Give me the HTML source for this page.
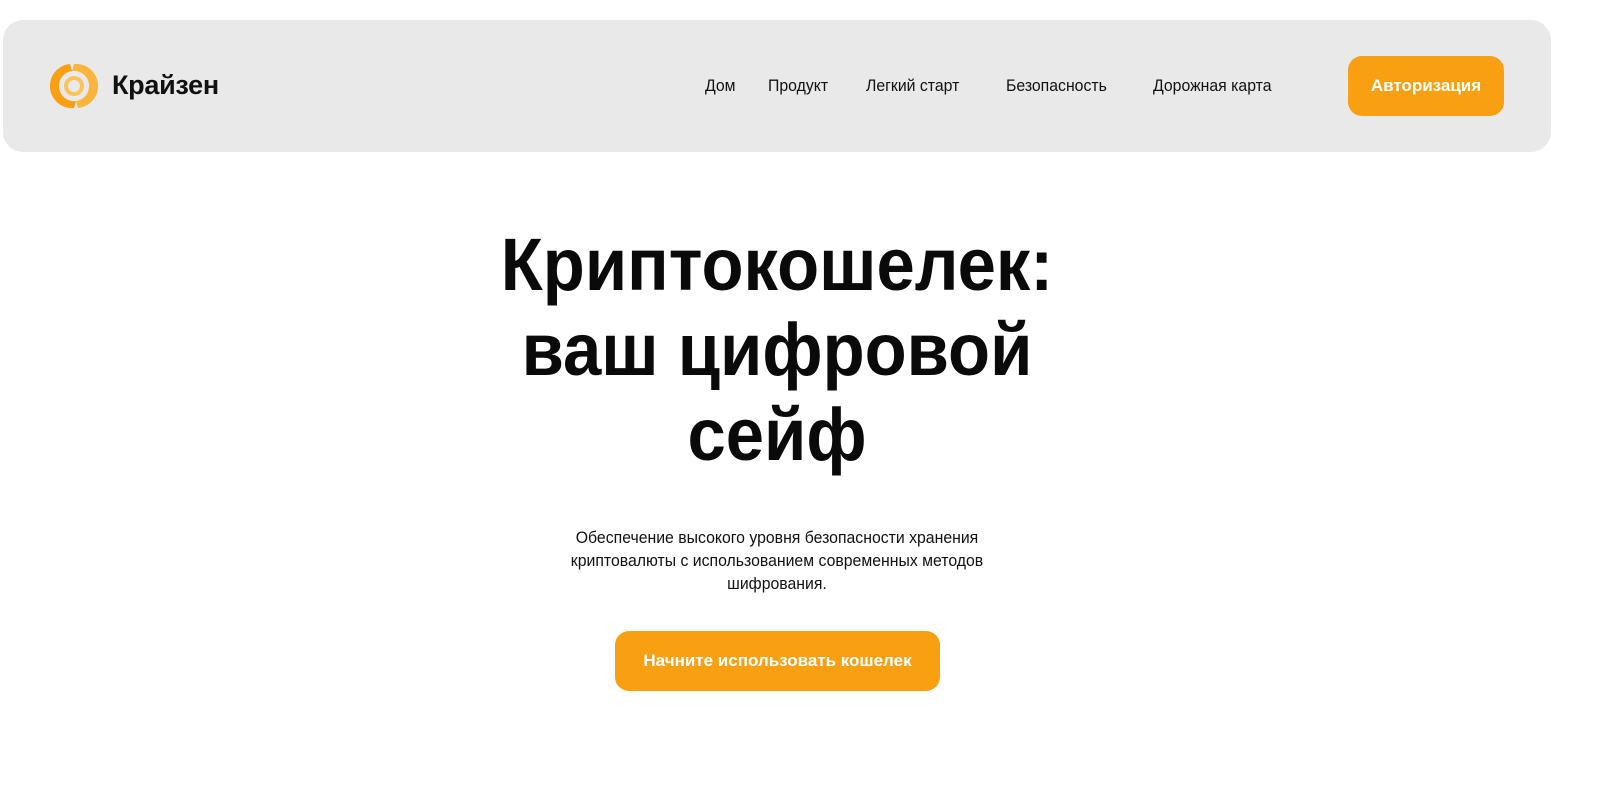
<!DOCTYPE html>
<html><head><meta charset="utf-8"><style>
*{margin:0;padding:0;box-sizing:border-box}
body{width:1600px;height:787px;background:#fff;font-family:"Liberation Sans",Arial,sans-serif;color:#111;overflow:hidden}
.wrap{width:1554px;position:relative}
header{position:absolute;left:3px;top:20px;width:1548px;height:132px;background:#e9e9e9;border-radius:20px}
.brand{position:absolute;left:112px;top:70px;font-size:27px;font-weight:bold;letter-spacing:-0.3px}
nav{position:absolute;top:76px;left:705px;font-size:17px;white-space:nowrap}
nav span{position:absolute;transform:scaleX(.93);transform-origin:left}
.btn{position:absolute;background:#f9a012;color:#fff;font-weight:bold;font-size:17px;border-radius:14px;display:flex;align-items:center;justify-content:center}
h1{position:absolute;left:0;width:1554px;top:222px;text-align:center;font-size:74px;line-height:85px;font-weight:bold;color:#0a0a0a;transform:scaleX(.93)}
p{position:absolute;left:502px;width:550px;top:526px;text-align:center;font-size:17px;line-height:23px;transform:scaleX(.93)}
</style></head><body><div class="wrap">
<header></header>
<svg width="52" height="50" viewBox="0 0 52 50" style="position:absolute;left:48px;top:61px">
<path d="M22 3 A22 22 0 0 0 26 47 L28 40 A15 15 0 0 1 24 10 Z" fill="#f9a012"/>
<path d="M30 47 A22 22 0 0 0 26 3 L24 10 A15 15 0 0 1 28 40 Z" fill="#fbb53c"/>
<circle cx="26" cy="25" r="10" fill="#fcc35a"/>
<circle cx="26" cy="25" r="6" fill="#e9e9e9"/>
</svg>
<div class="brand">Крайзен</div>
<nav>
<span style="left:0">Дом</span>
<span style="left:63px">Продукт</span>
<span style="left:161px">Легкий старт</span>
<span style="left:301px">Безопасность</span>
<span style="left:448px">Дорожная карта</span>
</nav>
<div class="btn" style="left:1348px;top:56px;width:156px;height:60px">Авторизация</div>
<h1>Криптокошелек:<br>ваш цифровой<br>сейф</h1>
<p>Обеспечение высокого уровня безопасности хранения<br>криптовалюты с использованием современных методов<br>шифрования.</p>
<div class="btn" style="left:615px;top:631px;width:325px;height:60px">Начните использовать кошелек</div>
</div></body></html>
